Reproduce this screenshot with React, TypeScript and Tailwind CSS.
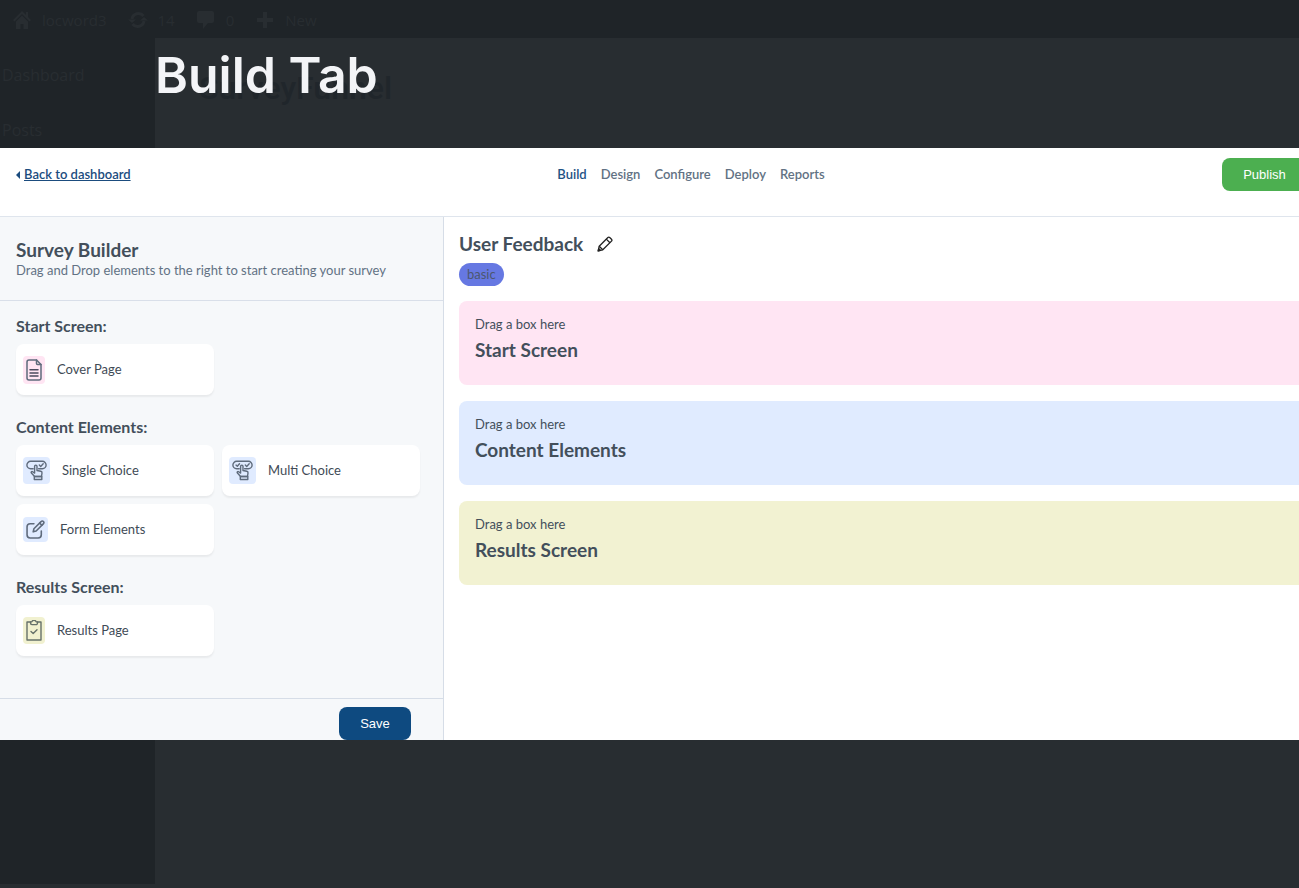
import React from 'react';

const BODY = "font-['Lato','Open_Sans',sans-serif]";

function CoverIcon() {
  return (
    <svg viewBox="0 0 16 22" className="h-[22px] w-4" fill="none" stroke="#5f6b7c" strokeWidth="1.5" strokeLinejoin="round" strokeLinecap="round" aria-hidden="true">
      <path d="M3 1h7.5L15 5.5V19a2 2 0 0 1-2 2H3a2 2 0 0 1-2-2V3a2 2 0 0 1 2-2Z" />
      <path d="M10.5 1v3.5a1 1 0 0 0 1 1H15" />
      <path d="M4 10.8h8M4 13.9h8M4 17h8" stroke="#4a4a5e" />
    </svg>
  );
}

function ChoiceIcon({ multi = false }: { multi?: boolean }) {
  return (
    <svg viewBox="0 0 21 20" className="h-[21px] w-[21px]" fill="none" stroke="#5f6b7c" strokeWidth="1.4" strokeLinejoin="round" strokeLinecap="round" aria-hidden="true">
      <path d="M7.2 8.2H4.6a3.7 3.7 0 0 1 0-7.4h11.8a3.7 3.7 0 0 1 0 7.4h-3.8" />
      <path d="M13.300 4.600l1.400 1.300 2.500-2.600" />
      {multi && <path d="M4 4.600l1.300 1.200 2.200-2.500" />}
      <path d="M8.600 12.600V5.800a1.200 1.200 0 0 1 2.400 0v4.200l3.800.8c.8.2 1.300.9 1.200 1.700l-.5 3.500H8.600l-3.200-3.400c-.8-1 .4-2.100 1.300-1.400l1.900 1.400" />
      <path d="M8.300 16h7.500v3H8.300z" />
    </svg>
  );
}

function FormIcon() {
  return (
    <svg viewBox="0 0 18 18" className="size-[19px]" fill="none" stroke="#5f6b7c" strokeWidth="1.500" strokeLinejoin="round" strokeLinecap="round" aria-hidden="true">
      <path d="M7.500 3.500H4A3 3 0 0 0 1 6.500V14a3 3 0 0 0 3 3h7.500a3 3 0 0 0 3-3v-3.500" />
      <path d="M6.800 11.200l.7-2.900 7-7a1.300 1.300 0 0 1 1.900 0l.2.2a1.300 1.300 0 0 1 0 1.900l-7 7z" />
      <path d="M13 3l2 2" />
    </svg>
  );
}

function ResultsIcon() {
  return (
    <svg viewBox="0 0 16 21" className="h-[21px] w-4" fill="none" stroke="#66716a" strokeWidth="1.400" strokeLinejoin="round" strokeLinecap="round" aria-hidden="true">
      <path d="M4.500 2H1v18h14V2h-3.500" />
      <path d="M4.500 1.900h1.300a2.300 2.300 0 0 1 4.400 0h1.300v1.200a1.500 1.500 0 0 1-1.500 1.500H6a1.500 1.500 0 0 1-1.500-1.500z" />
      <path d="M5 11.500l2.200 2 3.800-3.700" />
    </svg>
  );
}

function PencilIcon() {
  return (
    <svg viewBox="0 0 16 16" className="size-4" fill="none" stroke="#222" strokeWidth="1.300" strokeLinejoin="round" aria-hidden="true">
      <path d="M1.200 14.800l1-4.600 8.700-8.700a1.300 1.300 0 0 1 1.800 0l1.800 1.800a1.300 1.300 0 0 1 0 1.800l-8.700 8.700z" />
      <path d="M9.300 3.100l3.600 3.600M2.200 10.200l3.600 3.600" />
      <path d="M1.200 14.800l.5-2.200 1.700 1.700z" fill="#222" />
    </svg>
  );
}

function ElementCard({ label, tint, children }: { label: string; tint: string; children: React.ReactNode }) {
  return (
    <button type="button" className="flex h-[51px] w-full items-center gap-3 rounded-lg bg-white px-[7px] text-left text-[13px] text-[#3f4b56] shadow-[0_2px_2px_rgba(0,0,0,0.06)]">
      <span className={`flex items-center rounded p-[3px] ${tint}`}>{children}</span>
      {label}
    </button>
  );
}

function Group({ title, children }: { title: string; children: React.ReactNode }) {
  return (
    <section>
      <h3 className="mb-2 text-base leading-5 font-bold text-[#434f5b]">{title}</h3>
      <div className="grid grid-cols-2 gap-2">{children}</div>
    </section>
  );
}

function Zone({ title, tint }: { title: string; tint: string }) {
  return (
    <section className={`h-[84px] rounded-l-lg px-4 pt-[11px] ${tint}`}>
      <p className="text-[13px] leading-6 text-[#434f5b]">Drag a box here</p>
      <h3 className="text-[19px] leading-7 font-bold text-[#434f5b]">{title}</h3>
    </section>
  );
}

const tabs = ['Build', 'Design', 'Configure', 'Deploy', 'Reports'];

export default function App() {
  return (
    <div className="flex min-h-screen flex-col overflow-hidden bg-[#282d31] font-['Open_Sans','Noto_Sans',sans-serif]">
      <div className="flex h-[38px] items-center bg-[#1f2428] pt-[2px] pl-3 text-[15px] font-medium text-[#282d31]">
        <svg viewBox="0 0 20 20" className="size-5" fill="currentColor" aria-hidden="true">
          <path d="M10 1L1 10l1.500 1.500L10 4l7.500 7.500L19 10l-3-3V2h-2v3zM4 11.500V19h4.500v-5h3v5H16v-7.500l-6-6z" />
        </svg>
        <span className="ml-[10px]">locword3</span>
        <svg viewBox="0 0 20 20" className="ml-[21px] size-5" fill="none" stroke="currentColor" strokeWidth="3" aria-hidden="true">
          <path d="M4 9a6.500 6.500 0 0 1 11.500-3M16 11A6.500 6.500 0 0 1 4.500 14" />
          <path d="M0 9.500h8L4 13zM12 10.500h8L16 7z" fill="currentColor" stroke="none" />
        </svg>
        <span className="ml-[10px]">14</span>
        <svg viewBox="0 0 20 20" className="ml-[21px] size-5" fill="currentColor" aria-hidden="true">
          <path d="M3 1h13a2 2 0 0 1 2 2v8a2 2 0 0 1-2 2h-4l-5 6v-6H3a2 2 0 0 1-2-2V3a2 2 0 0 1 2-2z" />
        </svg>
        <span className="ml-[10px]">0</span>
        <svg viewBox="0 0 20 20" className="ml-[21px] size-5" fill="currentColor" aria-hidden="true">
          <path d="M8 2h4v6h6v4h-6v6H8v-6H2V8h6z" />
        </svg>
        <span className="ml-[10px]">New</span>
      </div>

      <div className="flex h-[110px]">
        <div className="w-[155px] shrink-0 bg-[#1f2428] pt-[23px] pl-[2px] text-base text-[#282d31]">
          <p className="leading-7">Dashboard</p>
          <p className="mt-[27px] leading-7">Posts</p>
        </div>
        <div className="relative">
          <p className="pt-[30px] pl-11 text-[32px] leading-10 font-medium text-[#20262b] font-['Roboto',sans-serif]">SurveyFunnel</p>
          <h1 className="absolute top-2 left-0 text-[50px] leading-[58px] font-semibold whitespace-nowrap text-[#f3f4f7] font-['Inter',sans-serif]">Build Tab</h1>
        </div>
      </div>

      <div className={`bg-white ${BODY}`}>
        <header className="-mr-2 flex h-[69px] items-start justify-between border-b border-[#dfe5ed] pt-[10px] pl-4">
          <div className="flex h-[33px] w-36 items-center gap-1 text-[13px] font-semibold text-[#1b4c7e]">
            <svg viewBox="0 0 4 8" className="h-2 w-1" fill="currentColor" aria-hidden="true"><path d="M4 0v8L0 4z" /></svg>
            <a href="#dashboard" className="underline">Back to dashboard</a>
          </div>
          <nav className="flex h-[33px] items-center gap-[14px] text-[13px] font-semibold">
            {tabs.map((t) => (
              <a key={t} href={`#${t.toLowerCase()}`} className={t === 'Build' ? 'text-[#1f5385]' : 'text-[#627284]'}>{t}</a>
            ))}
          </nav>
          <button type="button" className="h-[33px] w-[85px] rounded-lg bg-[#4caf50] text-[13px] text-white font-['Liberation_Sans',sans-serif]">Publish</button>
        </header>

        <div className="flex">
          <aside className="flex w-[444px] shrink-0 flex-col border-r border-[#d6dde7] bg-[#f6f8fa]">
            <div className="h-[84px] border-b border-[#d9dfe9] px-4 pt-[21px]">
              <h2 className="text-[19px] leading-6 font-bold text-[#434f5b]">Survey Builder</h2>
              <p className="text-[13px] leading-4 text-[#627284]">Drag and Drop elements to the right to start creating your survey</p>
            </div>
            <div className="flex flex-1 flex-col gap-[22px] pt-[15px] pr-[23px] pb-[42px] pl-4">
              <Group title="Start Screen:">
                <ElementCard label="Cover Page" tint="bg-[#ffe5f3]"><CoverIcon /></ElementCard>
              </Group>
              <Group title="Content Elements:">
                <ElementCard label="Single Choice" tint="bg-[#e0ebff]"><ChoiceIcon /></ElementCard>
                <ElementCard label="Multi Choice" tint="bg-[#e0ebff]"><ChoiceIcon multi /></ElementCard>
                <ElementCard label="Form Elements" tint="bg-[#e0ebff]"><FormIcon /></ElementCard>
              </Group>
              <Group title="Results Screen:">
                <ElementCard label="Results Page" tint="bg-[#f1f1d0]"><ResultsIcon /></ElementCard>
              </Group>
            </div>
            <div className="flex justify-end border-t border-[#d6dde7] pt-2 pr-8">
              <button type="button" className="h-[33px] w-[72px] rounded-lg bg-[#0e4a80] text-[13px] text-white font-['Liberation_Sans',sans-serif]">Save</button>
            </div>
          </aside>

          <main className="min-w-0 flex-1 pt-3 pl-[15px]">
            <div className="flex items-center gap-[14px]">
              <h2 className="text-[19px] leading-[30px] font-bold text-[#434f5b]">User Feedback</h2>
              <button type="button" aria-label="Edit title"><PencilIcon /></button>
            </div>
            <span className="mt-1 inline-flex h-[23px] items-center rounded-full bg-[#6678e2] px-2 text-[13px] text-[#4c5770]">basic</span>
            <div className="mt-[15px] flex flex-col gap-4">
              <Zone title="Start Screen" tint="bg-[#ffe5f3]" />
              <Zone title="Content Elements" tint="bg-[#e0ebff]" />
              <Zone title="Results Screen" tint="bg-[#f2f2d2]" />
            </div>
          </main>
        </div>
      </div>

      <div className="flex flex-1 pb-1">
        <div className="w-[155px] bg-[#1f2428]" />
      </div>
    </div>
  );
}
